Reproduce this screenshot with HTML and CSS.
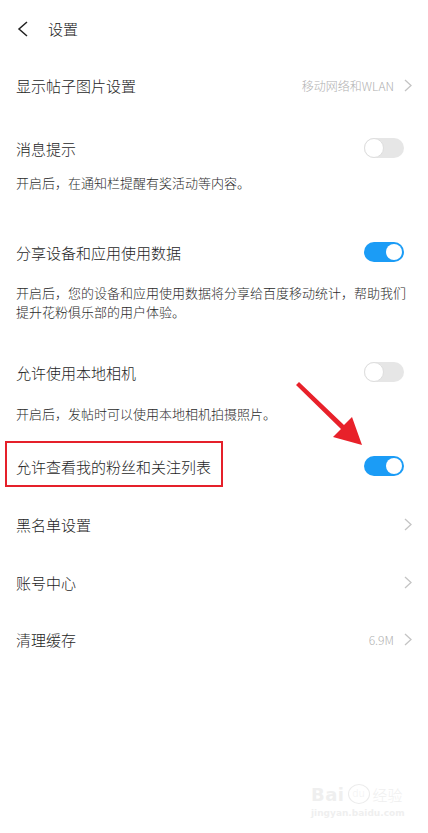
FILE: index.html
```html
<!DOCTYPE html>
<html lang="zh">
<head>
<meta charset="utf-8">
<title>设置</title>
<link rel="stylesheet" href="styles.css">
</head>
<body>
<div class="page">
  <header class="topbar">
    <svg class="back" width="14" height="16" viewBox="0 0 14 16"><path d="M11 1 L3 8 L11 15" fill="none" stroke="#222" stroke-width="1.5" stroke-linejoin="miter"/></svg>
    <h1 class="title">设置</h1>
  </header>

  <div class="row row--nav row--image">
    <span class="label">显示帖子图片设置</span>
    <span class="extra">移动网络和WLAN</span>
    <svg class="chev" width="8" height="13" viewBox="0 0 8 13"><path d="M1 1 L7 6.5 L1 12" fill="none" stroke="#c4c4c4" stroke-width="1.3"/></svg>
  </div>

  <section class="group group--notify">
    <div class="row row--toggle">
      <span class="label">消息提示</span>
      <span class="switch"></span>
    </div>
    <p class="desc">开启后，在通知栏提醒有奖活动等内容。</p>
  </section>

  <section class="group group--share">
    <div class="row row--toggle">
      <span class="label">分享设备和应用使用数据</span>
      <span class="switch switch--on"></span>
    </div>
    <p class="desc desc--share">开启后，您的设备和应用使用数据将分享给百度移动统计，帮助我们<br>提升花粉俱乐部的用户体验。</p>
  </section>

  <section class="group group--camera">
    <div class="row row--toggle">
      <span class="label">允许使用本地相机</span>
      <span class="switch"></span>
    </div>
    <p class="desc desc--camera">开启后，发帖时可以使用本地相机拍摄照片。</p>
  </section>

  <div class="row row--toggle row--marked">
    <span class="label label--marked">允许查看我的粉丝和关注列表</span>
    <span class="switch switch--on"></span>
  </div>

  <div class="row row--nav row--list row--first">
    <span class="label">黑名单设置</span>
    <svg class="chev" width="8" height="13" viewBox="0 0 8 13"><path d="M1 1 L7 6.5 L1 12" fill="none" stroke="#c4c4c4" stroke-width="1.3"/></svg>
  </div>
  <div class="row row--nav row--list">
    <span class="label">账号中心</span>
    <svg class="chev" width="8" height="13" viewBox="0 0 8 13"><path d="M1 1 L7 6.5 L1 12" fill="none" stroke="#c4c4c4" stroke-width="1.3"/></svg>
  </div>
  <div class="row row--nav row--list row--cache">
    <span class="label">清理缓存</span>
    <span class="extra">6.9M</span>
    <svg class="chev" width="8" height="13" viewBox="0 0 8 13"><path d="M1 1 L7 6.5 L1 12" fill="none" stroke="#c4c4c4" stroke-width="1.3"/></svg>
  </div>

  <svg class="arrow" width="80" height="80" viewBox="290 375 80 80">
    <polygon points="299,382 344,425 352,417 362,445 333,437 341,429 296,385" fill="#e8212a"/>
  </svg>

  <div class="watermark">
    <div class="wm-logo"><span class="wm-bai">Bai</span><span class="wm-du">du</span><span class="wm-cn">经验</span></div>
    <div class="wm-url">jingyan.baidu.com</div>
  </div>
</div>
</body>
</html>
```

FILE: styles.css
```css
html, body {
  margin: 0;
  padding: 0;
  background: #ffffff;
}

body {
  font-family: "Noto Sans CJK SC", "Noto Sans", sans-serif;
  font-weight: 300;
  color: #222222;
}

.page {
  position: relative;
  width: 428px;
  height: 833px;
  overflow: hidden;
}

.topbar {
  height: 57px;
  display: flex;
  align-items: center;
  padding-left: 16px;
}

.back {
  display: block;
  flex: none;
}

.title {
  margin: 0 0 0 18px;
  font-size: 15px;
  font-weight: 300;
  color: #222;
}

.row {
  display: flex;
  align-items: center;
  padding: 0 16px;
}

.label {
  font-size: 15px;
  color: #1e1e1e;
  flex: 1;
}

.row--nav {
  height: 57px;
}

.row--list {
  height: 58px;
}

.row--first {
  margin-top: 4px;
}

.row--cache {
  height: 56px;
}

.row--toggle {
  height: 50px;
  padding-right: 24px;
}

.extra {
  font-size: 12px;
  color: #b0b0b0;
  margin-right: 10px;
}

.chev {
  display: block;
  flex: none;
}

.switch {
  position: relative;
  flex: none;
  width: 40px;
  height: 20px;
  border-radius: 10px;
  background: #e6e6e6;
}

.switch::after {
  content: "";
  position: absolute;
  top: 0;
  left: 0;
  width: 20px;
  height: 20px;
  box-sizing: border-box;
  border-radius: 50%;
  background: #ffffff;
  border: 1.5px solid #dedede;
}

.switch--on {
  background: #1b9cf6;
}

.switch--on::after {
  left: auto;
  right: 2px;
  top: 2px;
  width: 16px;
  height: 16px;
  border: none;
}

.desc {
  margin: 0;
  padding: 0 16px;
  font-size: 13px;
  line-height: 19px;
  color: #2a2a2a;
}

.group--notify {
  margin-top: 9px;
}

.group--share {
  margin-top: 35px;
}

.desc--share {
  margin-top: 6px;
}

.group--camera {
  margin-top: 26px;
}

.desc--camera {
  margin-top: 7px;
}

.row--marked {
  margin-top: 18px;
}

.label--marked {
  position: relative;
  flex: none;
  margin-right: auto;
}

.label--marked::before {
  content: "";
  position: absolute;
  left: -11px;
  right: -12px;
  top: -15px;
  bottom: -10px;
  border: 2px solid #e5202a;
}

.arrow {
  position: absolute;
  left: 290px;
  top: 375px;
  pointer-events: none;
}

.watermark {
  position: absolute;
  left: 311px;
  top: 782px;
  color: #efefef;
  font-family: "DejaVu Sans", sans-serif;
}

.wm-logo {
  display: flex;
  align-items: center;
  height: 24px;
}

.wm-bai {
  font-size: 18px;
  font-weight: bold;
  letter-spacing: 0.5px;
}

.wm-du {
  display: inline-block;
  margin-left: 3px;
  width: 20px;
  height: 18px;
  border-radius: 50%;
  border: 1.5px solid #ececec;
  font-size: 10px;
  line-height: 18px;
  text-align: center;
}

.wm-cn {
  margin-left: 3px;
  font-family: "Noto Sans CJK SC", sans-serif;
  font-size: 15px;
}

.wm-url {
  font-size: 9px;
  font-weight: bold;
  margin-top: 2px;
}
```
